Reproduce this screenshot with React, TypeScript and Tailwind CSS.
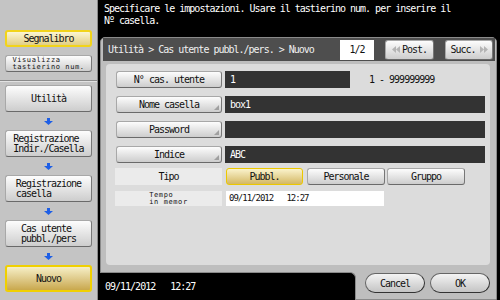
import React from 'react';

const BlueArrow = () => (
	<svg width="9" height="7" viewBox="0 0 9 7">
		<path d="M3 0h3v3h3L4.5 7 0 3h3z" fill="#1e5fe6" />
	</svg>
);

const Corner = () => (
	<svg className="absolute right-[2px] bottom-[2px]" width="5" height="5" viewBox="0 0 5 5">
		<path d="M5 0v5H0z" fill="#a0a0a0" />
	</svg>
);

const DoubleLeft = () => (
	<svg width="8" height="7" viewBox="0 0 8 7">
		<path d="M4 0v7L0 3.5zM8 0v7L4 3.5z" fill="#b4b4b4" />
	</svg>
);

const DoubleRight = () => (
	<svg width="8" height="7" viewBox="0 0 8 7">
		<path d="M0 0v7l4-3.5zM4 0v7l4-3.5z" fill="#b4b4b4" />
	</svg>
);

const grey =
	'border border-[#a8a8a8] border-b-[#6a6a6a] border-r-[#777] bg-linear-to-b from-[#fdfdfd] to-[#cdcdcd] text-[#111]';
const yellow = 'border border-[#ecc800] bg-linear-to-b from-[#faf3cc] to-[#d4b862] text-[#111]';

const Key = ({ children, mark = false }: { children: React.ReactNode; mark?: boolean }) => (
	<div className={`relative flex items-center justify-center w-[106px] rounded-[3px] ${grey}`}>
		{children}
		{mark && <Corner />}
	</div>
);

const Step = ({ children, active = false }: { children: React.ReactNode; active?: boolean }) => (
	<div
		className={`flex items-center justify-center h-[27px] rounded-[3px] leading-[10px] ${
			active ? 'border-2 border-[#f0d000] bg-linear-to-b from-[#f6efc6] to-[#c9a84c] text-[#111]' : grey
		}`}
	>
		<div className="text-left">{children}</div>
	</div>
);

const Arrow = () => (
	<div className="flex h-[18px] items-center justify-center">
		<BlueArrow />
	</div>
);

const App = () => {
	return (
		<div className="flex w-[500px] h-[300px] overflow-hidden bg-black text-[10px] tracking-[-1px] font-['DejaVu_Sans_Mono','Liberation_Mono',monospace]">
			<div className="flex flex-col w-[98px] h-[300px] bg-[#c4c4c4] border-r border-[#8a8a8a]">
				<div className="flex flex-col gap-[8px] h-[80px] px-[5px] pt-[30px]">
					<div className="flex items-center justify-center h-[17px] rounded-[3px] border-2 border-[#f2d41a] bg-linear-to-b from-[#fbf5d2] to-[#e2cf84] text-[#111]">
						Segnalibro
					</div>
					<div className={`flex items-center justify-center h-[17px] rounded-[3px] ${grey}`}>
						<div className="text-left text-[7px] leading-[7px] tracking-[0.6px]">
							Visualizza
							<br />
							tastierino num.
						</div>
					</div>
				</div>
				<div className="h-[2px] border-t border-[#8c8c8c] bg-[#e2e2e2]" />
				<div className="flex flex-col px-[5px] pt-[3px]">
					<Step>Utilità</Step>
					<Arrow />
					<Step>
						Registrazione
						<br />
						Indir./Casella
					</Step>
					<Arrow />
					<Step>
						Registrazione
						<br />
						casella
					</Step>
					<Arrow />
					<Step>
						Cas utente
						<br />
						pubbl./pers
					</Step>
					<Arrow />
					<Step active>Nuovo</Step>
				</div>
			</div>

			<div className="flex flex-col flex-1">
				<div className="h-[37px] pl-[6px] pt-[3px] leading-[12px] text-white whitespace-pre">
					Specificare le impostazioni. Usare il tastierino num. per inserire il
					<br />
					Nº casella.
				</div>

				<div className="flex flex-col ml-[2px] w-[397px] h-[263px] border border-[#8a8a8a] rounded-t-[5px] bg-[#bebebe]">
					<div className="flex items-center ml-[2px] mr-[1px] h-[23px] bg-[#4e4e4e] text-[#f0f0f0]">
						<div className="flex-1 pl-[5px] whitespace-pre">Utilità &gt; Cas utente pubbl./pers. &gt; Nuovo</div>
						<div className="flex items-center justify-center w-[34px] h-[20px] bg-white text-[#111]">1/2</div>
						<div className={`flex items-center justify-center gap-[2px] ml-[11px] w-[49px] h-[20px] rounded-[3px] ${grey}`}>
							<DoubleLeft />
							<span>Post.</span>
						</div>
						<div className={`flex items-center justify-center gap-[4px] ml-[11px] mr-[2px] w-[48px] h-[20px] rounded-[3px] ${grey}`}>
							<span>Succ.</span>
							<DoubleRight />
						</div>
					</div>

					<div className="flex flex-col ml-[5px] mr-[6px] mt-[3px] h-[201px] rounded-[4px] bg-[#dcdcdc] pl-[10px] pt-[7px]">
						<div className="flex h-[17px] gap-[3px]">
							<Key>N° cas. utente</Key>
							<div className="flex items-center w-[125px] bg-[#333] pl-[5px] text-white">1</div>
							<div className="flex items-center ml-[16px] text-[#111] whitespace-pre">1 - 999999999</div>
						</div>
						<div className="flex h-[17px] gap-[3px] mt-[8px]">
							<Key mark>Nome casella</Key>
							<div className="flex items-center w-[260px] bg-[#333] pl-[5px] text-white">box1</div>
						</div>
						<div className="flex h-[17px] gap-[3px] mt-[8px]">
							<Key mark>Password</Key>
							<div className="w-[260px] bg-[#333]" />
						</div>
						<div className="flex h-[17px] gap-[3px] mt-[8px]">
							<Key mark>Indice</Key>
							<div className="flex items-center w-[260px] bg-[#333] pl-[5px] text-white">ABC</div>
						</div>

						<div className="flex h-[17px] mt-[5px] -ml-px">
							<div className="flex items-center justify-center w-[107px] bg-[#ebebeb] text-[#111]">Tipo</div>
							<div className={`flex items-center justify-center ml-[4px] w-[77px] rounded-[3px] ${yellow}`}>Pubbl.</div>
							<div className={`flex items-center justify-center ml-[4px] w-[78px] rounded-[3px] ${grey}`}>Personale</div>
							<div className={`flex items-center justify-center ml-[2px] w-[78px] rounded-[3px] ${grey}`}>Gruppo</div>
						</div>
						<div className="flex h-[15px] mt-[6px] -ml-px">
							<div className="flex items-center justify-center w-[107px] bg-[#ebebeb] text-[#111]">
								<div className="text-left text-[7px] leading-[7px] tracking-[0.6px]">
									Tempo
									<br />
									in memor
								</div>
							</div>
							<div className="flex items-center ml-[4px] w-[158px] bg-white pl-[3px] text-[#111] whitespace-pre text-[9px]">
								09/11/2012   12:27
							</div>
						</div>
					</div>

					<div className="flex flex-1 items-end -ml-px -mb-px">
						<div className="flex items-center w-[256px] h-[28px] rounded-tr-[6px] border-t border-r border-[#8a8a8a] bg-black pl-[5px] text-white whitespace-pre">
							09/11/2012   12:27
						</div>
						<div className="flex flex-1 h-[28px] items-start gap-[5px] pl-[9px] pt-[1px]">
							<div className="flex items-center justify-center w-[60px] h-[20px] rounded-[10px] border border-[#666] border-b-[#333] border-r-[#333] bg-linear-to-b from-[#f4f4f4] to-[#c4c4c4] text-[#111]">
								Cancel
							</div>
							<div className="flex items-center justify-center w-[60px] h-[20px] rounded-[10px] border border-[#666] border-b-[#333] border-r-[#333] bg-linear-to-b from-[#f4f4f4] to-[#c4c4c4] text-[#111]">
								OK
							</div>
						</div>
					</div>
				</div>
			</div>
		</div>
	);
};

export default App;
